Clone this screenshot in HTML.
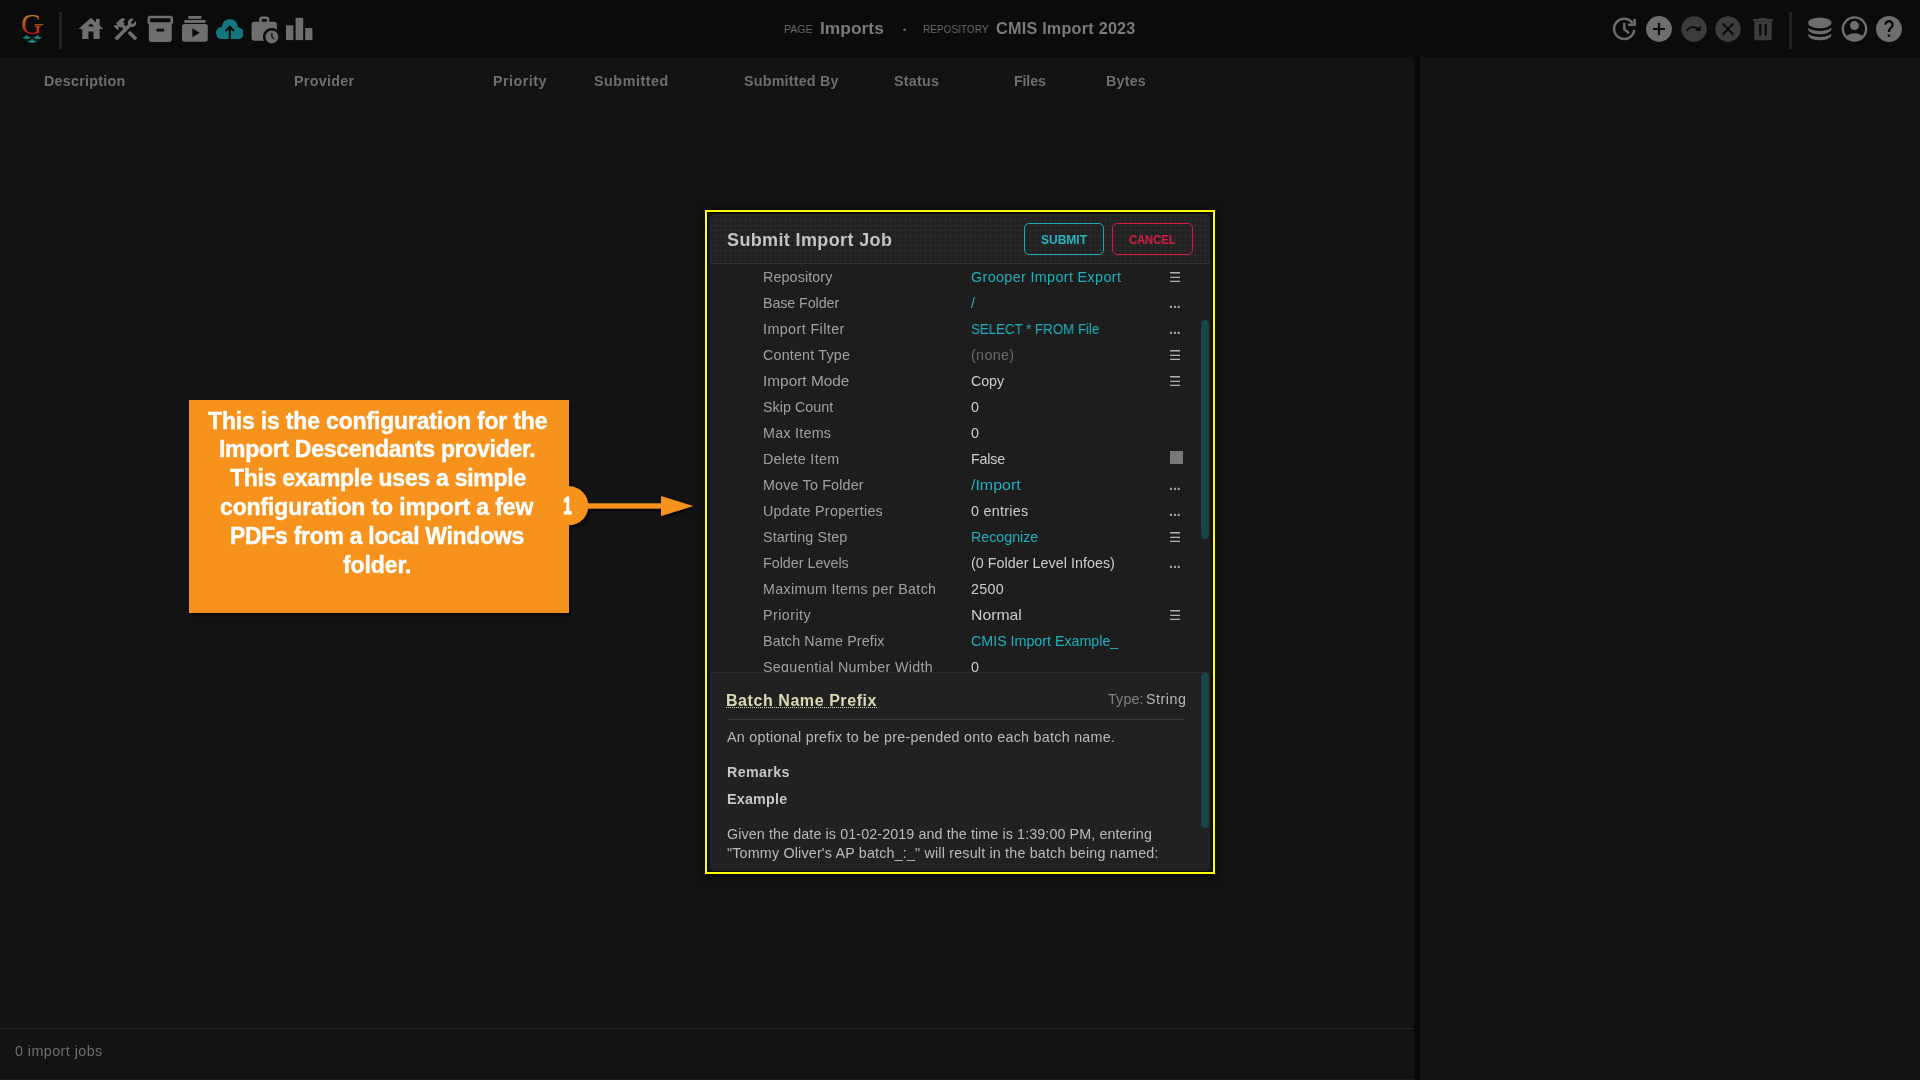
<!DOCTYPE html>
<html lang="en">
<head>
<meta charset="utf-8">
<title>Imports - CMIS Import 2023</title>
<style>
*{box-sizing:border-box;margin:0;padding:0}
html,body{width:1920px;height:1080px;overflow:hidden;background:#131313;font-family:"Liberation Sans",sans-serif}
.abs,.t,i,svg{position:absolute}
.t{white-space:pre;display:block;transform-origin:0 50%;will-change:transform;font-family:inherit;font-weight:400;background:none;border:0;text-align:left}
i{display:block}
#top{left:0;top:0;width:1920px;height:57px;background:#0b0b0b}
#split{left:1414px;top:57px;width:6px;height:1023px;background:#090909}
#status{left:0;top:1028px;width:1414px;height:1px;background:#242424}
#botline{left:0;top:1079px;width:1414px;height:1px;background:#1d1d1d}
.vsep{width:3px;height:37px;top:12px;background:#222}
/* dialog */
#hl{left:704.8px;top:209.8px;width:510.5px;height:664.2px;border:2.4px solid #ffff00;background:#111;box-shadow:0 0 0 1px #07070c,inset 0 0 0 1px #07070c,0 1px 8px 2px rgba(0,0,0,.45)}
#dlg{left:710px;top:214px;width:500.3px;height:657px;border-radius:5px;background:#1d1d1d;overflow:hidden}
#dhead{left:0;top:0;width:500px;height:50px;background-color:#212121;
 background-image:linear-gradient(to right,#292929 1px,transparent 1px),linear-gradient(to bottom,#292929 1px,transparent 1px);
 background-size:5px 5px;background-position:0 1px;border-bottom:1px solid #323232}
#help{left:0;top:458px;width:500px;height:199px;background:#212121;border-top:1px solid #2d2d2d}
.btn{top:9px;height:32px;border-radius:5px;border:1.3px solid}
.sb{left:491px;width:8px;border-radius:4px;background:#14464c}
.hr{left:17px;top:505px;width:458px;height:1px;background:#3a3a3a}
.mn{left:1169px;font:13.5px/20px "DejaVu Sans",sans-serif;color:#b2b2b2}
.dt{left:1169.2px;font:bold 14px/20px "Liberation Sans",sans-serif;color:#a6a6a6}
.cb{left:1170.3px;width:13.2px;height:13.2px;background:#787878}
.hp{text-decoration:underline dotted;text-decoration-thickness:1.1px;text-underline-offset:.8px}
#clip{left:0;top:0;width:1920px;height:672px;overflow:hidden}
/* callout */
.ct{-webkit-text-stroke:.4px #fff}
</style>
</head>
<body>
<div id="top" class="abs"></div>
<div id="split" class="abs"></div>
<div id="status" class="abs"></div>
<div id="botline" class="abs"></div>
<i class="vsep" style="left:59px"></i>
<i class="vsep" style="left:1789px"></i>
<!-- logo -->
<svg style="left:18px;top:10px" width="30" height="38" viewBox="0 0 30 38">
<defs><linearGradient id="lg" gradientUnits="userSpaceOnUse" x1="0" y1="4" x2="0" y2="24"><stop offset="0" stop-color="#c08217"/><stop offset=".5" stop-color="#b9521f"/><stop offset="1" stop-color="#b31a20"/></linearGradient></defs>
<text x="2.9" y="23.6" font-family="Liberation Serif, serif" font-size="30.2" fill="url(#lg)" textLength="20.8" lengthAdjust="spacingAndGlyphs">G</text>
<rect x="16.5" y="14.1" width="8.8" height="1.1" fill="#b9551f"/>
<path fill="#15857d" d="M8.75 24.90Q7.68 27.10 4.30 27.38Q8.75 30.58 13.20 27.38Q9.82 27.10 8.75 24.90ZM19.50 24.90Q18.40 27.10 14.90 27.38Q19.50 30.58 24.10 27.38Q20.60 27.10 19.50 24.90ZM14.15 28.50Q12.90 30.98 8.95 31.29Q14.15 34.89 19.35 31.29Q15.40 30.98 14.15 28.50Z"/>
</svg>
<!-- house -->
<svg style="left:76.100px;top:14px" width="29.900" height="29.900" viewBox="0 0 24 24" fill="#6e6e6e"><path d="M19 9.300V4h-3v2.600L12 3 2 12h3v8h5v-6h4v6h5v-8h3l-3-2.700zm-9 .7c0-1.100.9-2 2-2s2 .9 2 2h-4z"/></svg>
<!-- construction -->
<svg style="left:111.200px;top:14.500px" width="28.900" height="28.900" viewBox="0 0 24 24" fill="#6e6e6e"><path d="m13.783 15.172 2.121-2.121 5.996 5.996-2.121 2.121zM17.500 10c1.930 0 3.500-1.570 3.500-3.500 0-.58-.16-1.120-.41-1.600l-2.700 2.700-1.490-1.490 2.700-2.700c-.48-.25-1.020-.41-1.600-.41C15.570 3 14 4.570 14 6.500c0 .41.080.8.210 1.160l-1.850 1.850-1.780-1.780.71-.71-1.410-1.410L12 3.490c-1.170-1.170-3.070-1.170-4.240 0L4.220 7.030l1.410 1.410H2.810l-.71.71 3.540 3.540.71-.71V9.150l1.410 1.410.71-.71 1.780 1.780-7.410 7.410 2.120 2.120L16.340 9.790c.36.130.75.210 1.160.21z"/></svg>
<!-- inventory_2 -->
<svg style="left:145.100px;top:13.100px" width="30.600" height="31.700" viewBox="0 0 24 24" preserveAspectRatio="none" fill="#6e6e6e"><path d="M20 2H4c-1 0-2 .9-2 2v3.010c0 .72.430 1.340 1 1.690V20c0 1.100 1.100 2 2 2h14c.9 0 2-.9 2-2V8.700c.57-.35 1-.97 1-1.690V4c0-1.100-1-2-2-2zm-5 12H9v-2h6v2zm5-7H4V4h16v3z"/></svg>
<!-- subscriptions -->
<svg style="left:182.200px;top:16px" width="25.800" height="25.800" viewBox="0 0 25.800 25.800" fill="#6e6e6e"><rect x="6.300" y="0" width="13.100" height="2.900"/><rect x="2.300" y="4" width="21.200" height="2.900"/><rect x="0" y="8" width="25.800" height="17.800" rx="2.700"/><path fill="#0b0b0b" d="M10.300 12.200l7.300 4.550-7.300 4.550z"/></svg>
<!-- cloud upload -->
<svg style="left:215.700px;top:18.900px" width="27.800" height="20.300" viewBox="0 0 27.800 20.300"><g fill="#13757d"><circle cx="13.900" cy="7.900" r="7.900"/><circle cx="6.300" cy="14" r="6.300"/><circle cx="21.700" cy="14.300" r="6"/><rect x="6.300" y="10" width="15.400" height="10.300"/></g><path d="M9.600 12.100l4.200-4.300 4.200 4.300M13.800 8.400v11.900" fill="none" stroke="#0b0b0b" stroke-width="2.100"/></svg>
<!-- work_history -->
<svg style="left:249.300px;top:13.500px" width="30.500" height="30.500" viewBox="0 0 24 24" fill="#6e6e6e"><path d="M18 11c1.490 0 2.870.47 4 1.260V8c0-1.110-.89-2-2-2h-4V4c0-1.110-.89-2-2-2h-4c-1.110 0-2 .89-2 2v2H4c-1.110 0-1.990.89-1.990 2L2 19c0 1.110.89 2 2 2h7.680A6.995 6.995 0 0 1 18 11zm-8-7h4v2h-4V4z"/><path d="M18 13c-2.760 0-5 2.240-5 5s2.240 5 5 5 5-2.240 5-5-2.240-5-5-5zm1.650 7.350L17.500 18.200V15h1v2.790l1.850 1.850-.7.710z"/></svg>
<!-- leaderboard -->
<svg style="left:286px;top:17px" width="27" height="24" viewBox="0 0 27 24" fill="#6e6e6e"><rect x="0" y="8.300" width="7.300" height="14.800"/><rect x="9.600" y="0.800" width="7.600" height="22.300"/><rect x="19.200" y="11" width="7.200" height="12.100"/></svg>
<!-- update -->
<svg style="left:1606px;top:10px" width="40" height="38" viewBox="1606 10 40 38" fill="none" stroke="#6b6b6b" stroke-width="2.500"><path d="M1632.67 23.40A10.1 10.1 0 1 0 1634.24 29.96"/><path d="M1634.600 19V24.750H1628" stroke-width="2.600"/><path d="M1624.300 23V29.200L1629 33.300" stroke-width="2.500"/></svg>
<!-- add circle -->
<svg style="left:1645.800px;top:16px" width="26" height="26" viewBox="0 0 26 26"><circle cx="13" cy="13" r="12.900" fill="#6e6e6e"/><path d="M13 7v12M7 13h12" stroke="#0b0b0b" stroke-width="2.200" fill="none"/></svg>
<!-- redo circle -->
<svg style="left:1680.500px;top:16px" width="26" height="26" viewBox="0 0 26 26"><circle cx="13" cy="13" r="12.700" fill="#3c3c3c"/><path d="M6.300 14.300c1.700-3.300 6.200-4.700 10.500-1.500" stroke="#0b0b0b" stroke-width="1.900" fill="none" stroke-linecap="round"/><path d="M19.600 9.500v5.400h-5.400z" fill="#0b0b0b"/></svg>
<!-- cancel circle -->
<svg style="left:1715px;top:16px" width="26" height="26" viewBox="0 0 26 26"><circle cx="13" cy="13" r="12.700" fill="#3c3c3c"/><path d="M7.600 7.600l10.800 10.800M18.400 7.600L7.600 18.400" stroke="#0b0b0b" stroke-width="2.100" fill="none"/></svg>
<!-- trash -->
<svg style="left:1752px;top:17px" width="22" height="24" viewBox="0 0 22 24" fill="#3c3c3c"><path d="M1 1.900h5.700l.8-.9h7l.8.900H21v2.300H1z"/><path d="M2.300 4.200h17.400v17.300c0 1-.8 1.800-1.800 1.800H4.100c-1 0-1.800-.8-1.800-1.800z"/><path fill="#0b0b0b" d="M7.100 7h2.300v11.600H7.100zM12.600 7h2.300v11.600h-2.300z"/></svg>
<!-- database -->
<svg style="left:1806px;top:15px" width="28" height="28" viewBox="0 0 28 28" fill="#6c6c6c" stroke="#0b0b0b" stroke-width="5.400" paint-order="stroke"><ellipse cx="13.800" cy="20" rx="11.700" ry="5.350" stroke="none"/><ellipse cx="13.800" cy="13.950" rx="11.700" ry="5.350"/><ellipse cx="13.800" cy="7.900" rx="11.700" ry="5.350"/></svg>
<!-- account -->
<svg style="left:1841px;top:16px" width="27" height="27" viewBox="0 0 27 27"><defs><clipPath id="ac"><circle cx="13.500" cy="13" r="11.600"/></clipPath></defs><circle cx="13.500" cy="13" r="11.700" fill="none" stroke="#6e6e6e" stroke-width="2.300"/><circle cx="13.500" cy="9.600" r="4.500" fill="#6e6e6e"/><ellipse cx="13.500" cy="25" rx="10.500" ry="7.800" fill="#6e6e6e" clip-path="url(#ac)"/></svg>
<!-- help -->
<svg style="left:1876px;top:16px" width="26" height="26" viewBox="0 0 24 24" fill="#6e6e6e"><path d="M12 0C5.370 0 0 5.370 0 12s5.370 12 12 12 12-5.370 12-12S18.630 0 12 0zm1.100 19.200h-2.200V17h2.200v2.200zm2.280-8.550l-.99 1.010c-.79.800-1.290 1.460-1.290 3.110h-2.200v-.55c0-1.210.5-2.310 1.290-3.110l1.360-1.390c.41-.4.650-.95.650-1.550 0-1.210-.99-2.200-2.200-2.200s-2.200.99-2.200 2.200H7.600c0-2.430 1.970-4.400 4.400-4.400s4.400 1.970 4.400 4.400c0 .97-.4 1.850-1.020 2.480z"/></svg>

<div id="hl" class="abs"></div>
<div id="dlg" class="abs">
  <div id="dhead" class="abs"></div>
  <i class="btn" style="left:314px;width:80px;border-color:#1ba8b8"></i>
  <i class="btn" style="left:402px;width:81px;border-color:#d81b45"></i>
  <i class="sb" style="top:106px;height:219px"></i>
  <div id="help" class="abs"></div>
  <i class="sb" style="top:459px;height:155px"></i>
  <i class="hr"></i>
</div>
<span class="t mn" style="top:267px">☰</span>
<span class="t dt" style="top:293px">...</span>
<span class="t dt" style="top:319px">...</span>
<span class="t mn" style="top:345px">☰</span>
<span class="t mn" style="top:371px">☰</span>
<i class="cb" style="top:450.7px"></i>
<span class="t dt" style="top:475px">...</span>
<span class="t dt" style="top:501px">...</span>
<span class="t mn" style="top:527px">☰</span>
<span class="t dt" style="top:553px">...</span>
<span class="t mn" style="top:605px">☰</span>
<svg id="co" width="560" height="260" viewBox="170 380 560 260" style="left:170px;top:380px;overflow:visible">
<defs><filter id="ds" x="-5%" y="-5%" width="115%" height="115%"><feDropShadow dx="1.5" dy="2.5" stdDeviation="1.6" flood-color="#000" flood-opacity=".7"/></filter></defs>
<g filter="url(#ds)" fill="#f7931e">
<rect x="189" y="400" width="380" height="213"/>
<circle cx="568.8" cy="505.8" r="19.5"/>
<rect x="586" y="503.3" width="77" height="5.2"/>
<path d="M661 495.9 L693.2 505.9 L661 516 Z"/>
</g>
</svg>
<nav id="crumbs">
<span class="t" style="left:783.85px;top:19.00px;font-size:11px;line-height:20px;color:#6b6b6b;transform:scaleX(0.9653);">PAGE</span>
<span class="t" style="left:820.10px;top:18.00px;font-size:16.2px;line-height:20px;color:#7a7a7a;font-weight:700;transform:scaleX(1.0749);">Imports</span>
<span class="t" style="left:902.89px;top:20.00px;font-size:9px;line-height:20px;color:#6b6b6b;">•</span>
<span class="t" style="left:922.96px;top:19.00px;font-size:11px;line-height:20px;color:#6b6b6b;transform:scaleX(0.9122);">REPOSITORY</span>
<span class="t" style="left:996.36px;top:18.00px;font-size:16.2px;line-height:20px;color:#7a7a7a;font-weight:700;letter-spacing:0.235px;">CMIS Import 2023</span>
</nav>
<div id="cols" role="row">
<b class="t" style="left:43.62px;top:71.00px;font-size:14.3px;line-height:20px;color:#6e6e6e;font-weight:700;letter-spacing:0.27px;">Description</b>
<b class="t" style="left:293.52px;top:71.00px;font-size:14.3px;line-height:20px;color:#6e6e6e;font-weight:700;letter-spacing:0.294px;">Provider</b>
<b class="t" style="left:493.42px;top:71.00px;font-size:14.3px;line-height:20px;color:#6e6e6e;font-weight:700;letter-spacing:0.5px;">Priority</b>
<b class="t" style="left:593.69px;top:71.00px;font-size:14.3px;line-height:20px;color:#6e6e6e;font-weight:700;letter-spacing:0.544px;">Submitted</b>
<b class="t" style="left:743.69px;top:71.00px;font-size:14.3px;line-height:20px;color:#6e6e6e;font-weight:700;letter-spacing:0.209px;">Submitted By</b>
<b class="t" style="left:893.69px;top:71.00px;font-size:14.3px;line-height:20px;color:#6e6e6e;font-weight:700;letter-spacing:0.264px;">Status</b>
<b class="t" style="left:1013.92px;top:71.00px;font-size:14.3px;line-height:20px;color:#6e6e6e;font-weight:700;letter-spacing:-0.177px;">Files</b>
<b class="t" style="left:1105.82px;top:71.00px;font-size:14.3px;line-height:20px;color:#6e6e6e;font-weight:700;letter-spacing:0.201px;">Bytes</b>
</div>
<footer id="statusbar">
<span class="t" style="left:15.37px;top:1041.00px;font-size:14.3px;line-height:20px;color:#6f6f6f;letter-spacing:0.446px;">0 import jobs</span>
</footer>
<aside id="callout">
<span class="t ct" style="left:207.83px;top:406.00px;font-size:23px;line-height:30px;color:#fff;font-weight:700;letter-spacing:-0.172px;">This is the configuration for the</span>
<span class="t ct" style="left:218.90px;top:434.00px;font-size:23px;line-height:30px;color:#fff;font-weight:700;letter-spacing:-0.295px;">Import Descendants provider.</span>
<span class="t ct" style="left:229.73px;top:463.00px;font-size:23px;line-height:30px;color:#fff;font-weight:700;letter-spacing:-0.271px;">This example uses a simple</span>
<span class="t ct" style="left:220.18px;top:492.00px;font-size:23px;line-height:30px;color:#fff;font-weight:700;letter-spacing:-0.126px;">configuration to import a few</span>
<span class="t ct" style="left:230.40px;top:521.00px;font-size:23px;line-height:30px;color:#fff;font-weight:700;letter-spacing:-0.297px;">PDFs from a local Windows</span>
<span class="t ct" style="left:343.02px;top:550.00px;font-size:23px;line-height:30px;color:#fff;font-weight:700;letter-spacing:-0.093px;">folder.</span>
<span class="t ct" style="left:562.91px;top:491.00px;font-size:24px;line-height:30px;color:#fff;font-weight:700;transform:scaleX(0.658);-webkit-text-stroke:.9px #fff;">1</span>
</aside>
<div id="dlgtext">
<h2 class="t" style="left:726.78px;top:230.00px;font-size:18px;line-height:20px;color:#c2c2c2;font-weight:700;letter-spacing:0.371px;">Submit Import Job</h2>
<button class="t" style="left:1040.74px;top:230.00px;font-size:12px;line-height:20px;color:#22b6c5;font-weight:700;letter-spacing:0.004px;">SUBMIT</button>
<button class="t" style="left:1129.25px;top:230.00px;font-size:12px;line-height:20px;color:#dc1e46;font-weight:700;transform:scaleX(0.9287);">CANCEL</button>
</div>
<div id="clip" class="abs" role="grid">
<span class="t" style="left:762.50px;top:267.00px;font-size:14.3px;line-height:20px;color:#a0a0a0;letter-spacing:0.118px;">Repository</span>
<span class="t" style="left:970.70px;top:267.00px;font-size:14.3px;line-height:20px;color:#1fb0c0;letter-spacing:0.381px;">Grooper Import Export</span>
<span class="t" style="left:762.50px;top:293.00px;font-size:14.3px;line-height:20px;color:#a0a0a0;letter-spacing:-0.089px;">Base Folder</span>
<span class="t" style="left:970.70px;top:293.00px;font-size:14.3px;line-height:20px;color:#1fb0c0;">/</span>
<span class="t" style="left:762.50px;top:319.00px;font-size:14.3px;line-height:20px;color:#a0a0a0;letter-spacing:0.418px;">Import Filter</span>
<span class="t" style="left:970.70px;top:319.00px;font-size:14.3px;line-height:20px;color:#1fb0c0;transform:scaleX(0.93);">SELECT * FROM File</span>
<span class="t" style="left:762.50px;top:345.00px;font-size:14.3px;line-height:20px;color:#a0a0a0;letter-spacing:0.187px;">Content Type</span>
<span class="t" style="left:970.70px;top:345.00px;font-size:14.3px;line-height:20px;color:#6a6a6a;letter-spacing:0.336px;">(none)</span>
<span class="t" style="left:762.50px;top:371.00px;font-size:14.3px;line-height:20px;color:#a0a0a0;transform:scaleX(1.0769);">Import Mode</span>
<span class="t" style="left:970.70px;top:371.00px;font-size:14.3px;line-height:20px;color:#cdcdcd;letter-spacing:-0.096px;">Copy</span>
<span class="t" style="left:762.50px;top:397.00px;font-size:14.3px;line-height:20px;color:#a0a0a0;letter-spacing:0.042px;">Skip Count</span>
<span class="t" style="left:970.70px;top:397.00px;font-size:14.3px;line-height:20px;color:#cdcdcd;">0</span>
<span class="t" style="left:762.50px;top:423.00px;font-size:14.3px;line-height:20px;color:#a0a0a0;letter-spacing:0.258px;">Max Items</span>
<span class="t" style="left:970.70px;top:423.00px;font-size:14.3px;line-height:20px;color:#cdcdcd;">0</span>
<span class="t" style="left:762.50px;top:449.00px;font-size:14.3px;line-height:20px;color:#a0a0a0;letter-spacing:0.296px;">Delete Item</span>
<span class="t" style="left:970.70px;top:449.00px;font-size:14.3px;line-height:20px;color:#cdcdcd;letter-spacing:-0.186px;">False</span>
<span class="t" style="left:762.50px;top:475.00px;font-size:14.3px;line-height:20px;color:#a0a0a0;letter-spacing:0.18px;">Move To Folder</span>
<span class="t" style="left:970.70px;top:475.00px;font-size:14.3px;line-height:20px;color:#1fb0c0;transform:scaleX(1.1165);">/Import</span>
<span class="t" style="left:762.50px;top:501.00px;font-size:14.3px;line-height:20px;color:#a0a0a0;letter-spacing:0.283px;">Update Properties</span>
<span class="t" style="left:970.70px;top:501.00px;font-size:14.3px;line-height:20px;color:#cdcdcd;letter-spacing:0.288px;">0 entries</span>
<span class="t" style="left:762.50px;top:527.00px;font-size:14.3px;line-height:20px;color:#a0a0a0;letter-spacing:0.136px;">Starting Step</span>
<span class="t" style="left:970.70px;top:527.00px;font-size:14.3px;line-height:20px;color:#1fb0c0;letter-spacing:-0.03px;">Recognize</span>
<span class="t" style="left:762.50px;top:553.00px;font-size:14.3px;line-height:20px;color:#a0a0a0;letter-spacing:-0.006px;">Folder Levels</span>
<span class="t" style="left:970.70px;top:553.00px;font-size:14.3px;line-height:20px;color:#cdcdcd;letter-spacing:0.037px;">(0 Folder Level Infoes)</span>
<span class="t" style="left:762.50px;top:579.00px;font-size:14.3px;line-height:20px;color:#a0a0a0;letter-spacing:0.318px;">Maximum Items per Batch</span>
<span class="t" style="left:970.70px;top:579.00px;font-size:14.3px;line-height:20px;color:#cdcdcd;letter-spacing:0.302px;">2500</span>
<span class="t" style="left:762.50px;top:605.00px;font-size:14.3px;line-height:20px;color:#a0a0a0;letter-spacing:0.452px;">Priority</span>
<span class="t" style="left:970.70px;top:605.00px;font-size:14.3px;line-height:20px;color:#cdcdcd;transform:scaleX(1.1025);">Normal</span>
<span class="t" style="left:762.50px;top:631.00px;font-size:14.3px;line-height:20px;color:#a0a0a0;letter-spacing:0.138px;">Batch Name Prefix</span>
<span class="t" style="left:970.70px;top:631.00px;font-size:14.3px;line-height:20px;color:#1fb0c0;letter-spacing:-0.026px;">CMIS Import Example_</span>
<span class="t" style="left:762.50px;top:657.00px;font-size:14.3px;line-height:20px;color:#a0a0a0;letter-spacing:0.311px;">Sequential Number Width</span>
<span class="t" style="left:970.70px;top:657.00px;font-size:14.3px;line-height:20px;color:#cdcdcd;">0</span>
</div>
<article id="helptext">
<h3 class="t hp" style="left:726.15px;top:691.00px;font-size:16px;line-height:20px;color:#dadab2;font-weight:700;letter-spacing:0.565px;">Batch Name Prefix</h3>
<span class="t" style="left:1107.78px;top:689.00px;font-size:14.3px;line-height:20px;color:#808080;letter-spacing:0.143px;">Type:</span>
<span class="t" style="left:1146.01px;top:689.00px;font-size:14.3px;line-height:20px;color:#b6b6b6;letter-spacing:0.505px;">String</span>
<span class="t" style="left:727.05px;top:727.00px;font-size:14.3px;line-height:20px;color:#bababa;letter-spacing:0.271px;">An optional prefix to be pre-pended onto each batch name.</span>
<h4 class="t" style="left:726.52px;top:762.00px;font-size:14.3px;line-height:20px;color:#c6c6c6;font-weight:700;letter-spacing:0.351px;">Remarks</h4>
<h4 class="t" style="left:726.52px;top:789.00px;font-size:14.3px;line-height:20px;color:#c6c6c6;font-weight:700;letter-spacing:0.222px;">Example</h4>
<span class="t" style="left:726.61px;top:824.00px;font-size:14.3px;line-height:20px;color:#bababa;letter-spacing:0.106px;">Given the date is 01-02-2019 and the time is 1:39:00 PM, entering</span>
<span class="t" style="left:726.70px;top:843.00px;font-size:14.3px;line-height:20px;color:#bababa;letter-spacing:0.183px;">"Tommy Oliver's AP batch_:_" will result in the batch being named:</span>
</article>
</body>
</html>
